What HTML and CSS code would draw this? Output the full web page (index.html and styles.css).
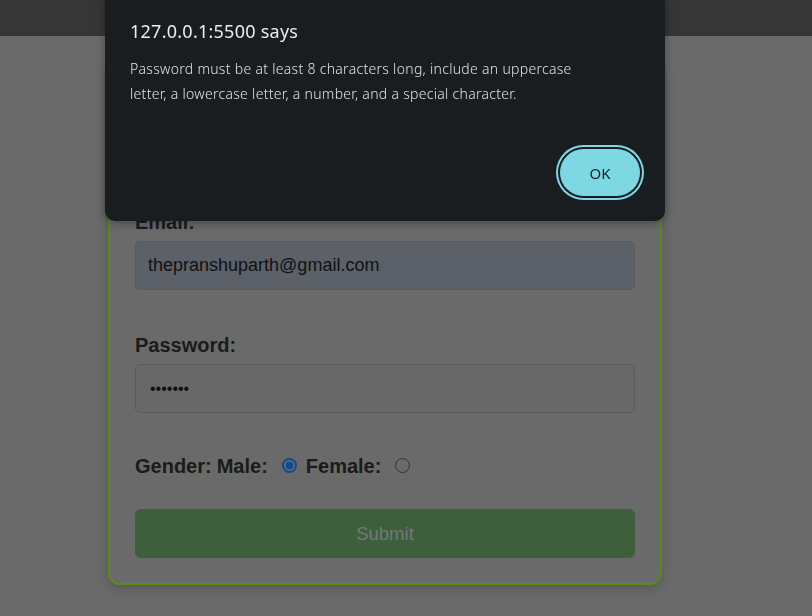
FILE: index.html
```html
<!DOCTYPE html>
<html lang="en">
<head>
<meta charset="utf-8">
<title>Registration</title>
<link rel="stylesheet" href="styles.css">
</head>
<body>
  <header class="topbar"></header>
  <main class="page">
    <form class="card">
      <label class="field-label" for="email">Email:</label>
      <input class="field field-autofill" id="email" type="email" value="thepranshuparth@gmail.com">

      <label class="field-label" for="password">Password:</label>
      <input class="field" id="password" type="password" value="1234567">

      <div class="gender">
        <span>Gender:</span>
        <span>Male:</span>
        <span class="radio radio-checked"></span>
        <span>Female:</span>
        <span class="radio"></span>
      </div>

      <button class="submit" type="button">Submit</button>
    </form>
  </main>

  <div class="dialog">
    <div class="dialog-title">127.0.0.1:5500 says</div>
    <p class="dialog-msg">Password must be at least 8 characters long, include an uppercase letter, a lowercase letter, a number, and a special character.</p>
    <div class="dialog-actions">
      <button class="ok" type="button">OK</button>
    </div>
  </div>
</body>
</html>
```

FILE: styles.css
```css
* { box-sizing: border-box; }

html, body {
  margin: 0;
  height: 100%;
}

body {
  background: #6a6a6a;
  font-family: "Liberation Sans", Arial, sans-serif;
  overflow: hidden;
}

.topbar {
  height: 36px;
  background: #363636;
}

.page {
  display: flex;
  padding-top: 26px;
  padding-left: 108px;
}

.card {
  width: 554px;
  border: 2px solid #5b8a1b;
  border-radius: 12px;
  padding: 148px 25px 25px;
  display: flex;
  flex-direction: column;
  box-shadow: 0 4px 12px rgba(0,0,0,0.18);
}

.field-label {
  font-size: 20px;
  font-weight: bold;
  color: #1b1b1b;
  line-height: 21px;
  margin-bottom: 8px;
}

.field {
  height: 49px;
  width: 500px;
  border: 1px solid #5a5a5a;
  border-radius: 5px;
  background: #686868;
  padding: 0 12px;
  font-family: "Liberation Sans", Arial, sans-serif;
  font-size: 18px;
  color: #111;
  margin-bottom: 45px;
  outline: none;
}

.field-autofill {
  background: #5c6069;
}

#password {
  font-size: 16px;
  padding-left: 14px;
  margin-bottom: 43px;
}

.gender {
  display: flex;
  align-items: center;
  font-size: 20px;
  font-weight: bold;
  color: #1b1b1b;
  line-height: 21px;
  height: 21px;
}

.gender span + span { margin-left: 5px; }

.gender .radio {
  flex: none;
  width: 15px;
  height: 15px;
  border-radius: 50%;
  border: 1px solid #333;
  margin: 0 4px 0 14px !important;
  position: relative;
  top: -1px;
}

.gender .radio-checked {
  border: 2px solid #0c4a91;
  background: radial-gradient(circle, #0c4a91 0 3.6px, #6a6a6a 4.2px);
}

.submit {
  margin-top: 32px;
  height: 49px;
  width: 500px;
  border: none;
  border-radius: 6px;
  background: #3d5f3c;
  color: #777;
  font-family: "Liberation Sans", Arial, sans-serif;
  font-size: 18.5px;
}

.dialog {
  position: fixed;
  left: 105px;
  top: -12px;
  width: 560px;
  height: 233px;
  background: #191d20;
  border-radius: 10px;
  box-shadow: 0 2px 10px rgba(0,0,0,0.35);
  padding: 30px 21px 0 25px;
  color: #e6e6e6;
  font-family: "Noto Sans", "Open Sans", sans-serif;
  display: flex;
  flex-direction: column;
}

.dialog-title {
  font-size: 18px;
  letter-spacing: 0.25px;
  line-height: 26px;
  color: #ececec;
}

.dialog-msg {
  margin: 12px 0 0;
  max-width: 470px;
  font-size: 14px;
  line-height: 25px;
  letter-spacing: 0.3px;
  color: #e2e2e2;
  font-weight: 300;
}

.dialog-actions {
  display: flex;
  justify-content: flex-end;
  margin-top: auto;
  padding: 0 4px 25px 0;
}

.ok {
  width: 80px;
  height: 47px;
  border: none;
  border-radius: 24px;
  background: #7dd8e3;
  color: #14202a;
  font-family: "Noto Sans", "Open Sans", sans-serif;
  font-size: 15px;
  box-shadow: 0 0 0 2px #191d20, 0 0 0 4px #7dd8e3;
}
```
